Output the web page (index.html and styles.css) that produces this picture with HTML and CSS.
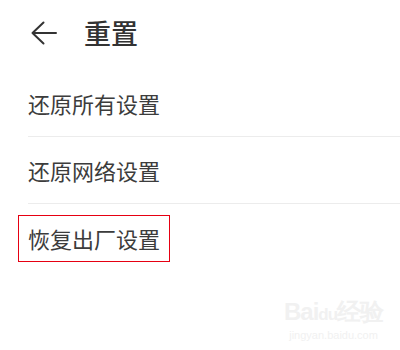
FILE: index.html
```html
<!DOCTYPE html>
<html lang="zh">
<head>
<meta charset="utf-8">
<link rel="stylesheet" href="styles.css">
</head>
<body>
<div class="page">
  <header class="header">
    <svg class="back" width="26" height="24" viewBox="0 0 26 24" aria-hidden="true">
      <path d="M1.5 12 H25 M12.5 1.5 L1.5 12 L12.5 22.5" fill="none" stroke="#333" stroke-width="2" stroke-linecap="round" stroke-linejoin="round"/>
    </svg>
    <h1 class="title">重置</h1>
  </header>
  <ul class="list">
    <li class="row"><span class="label">还原所有设置</span></li>
    <li class="row"><span class="label">还原网络设置</span></li>
    <li class="row last"><span class="label boxed">恢复出厂设置</span></li>
  </ul>
  <div class="watermark">
    <div class="wm-logo">Bai<span class="wm-du">du</span>经验</div>
    <div class="wm-url">jingyan.baidu.com</div>
  </div>
</div>
</body>
</html>
```
FILE: styles.css
```css
html, body {
  margin: 0;
  padding: 0;
  background: #fff;
}
.page {
  position: relative;
  width: 400px;
  height: 350px;
  overflow: hidden;
  font-family: "Noto Sans CJK SC", "Noto Sans", sans-serif;
  color: #363636;
}
.header {
  height: 70px;
  display: flex;
  align-items: center;
  padding-left: 31px;
  box-sizing: border-box;
  padding-bottom: 4px;
}
.back {
  display: block;
  flex: none;
}
.title {
  margin: 0 0 0 27px;
  font-size: 27px;
  font-weight: 500;
  line-height: 30px;
  color: #333;
}
.list {
  list-style: none;
  margin: 0;
  padding: 0 0 0 28px;
}
.row {
  height: 66px;
  display: flex;
  align-items: center;
  border-bottom: 1px solid #ececec;
}
.row.last {
  border-bottom: none;
}
.label {
  font-size: 22px;
  line-height: 30px;
  color: #3c3c3c;
}
.boxed {
  display: inline-block;
  border: 1px solid #e60012;
  padding: 0 9px;
  margin-left: -10px;
  line-height: 45px;
  margin-top: 3px;
}
.watermark {
  position: absolute;
  left: 284px;
  top: 298px;
  color: #f1f1f1;
  font-family: "Liberation Sans", Arial, sans-serif;
  text-align: center;
}
.wm-logo {
  font-size: 24px;
  font-weight: bold;
  line-height: 28px;
  letter-spacing: -1px;
}
.wm-du {
  font-size: 17px;
}
.wm-url {
  font-size: 11px;
  line-height: 13px;
}
```
